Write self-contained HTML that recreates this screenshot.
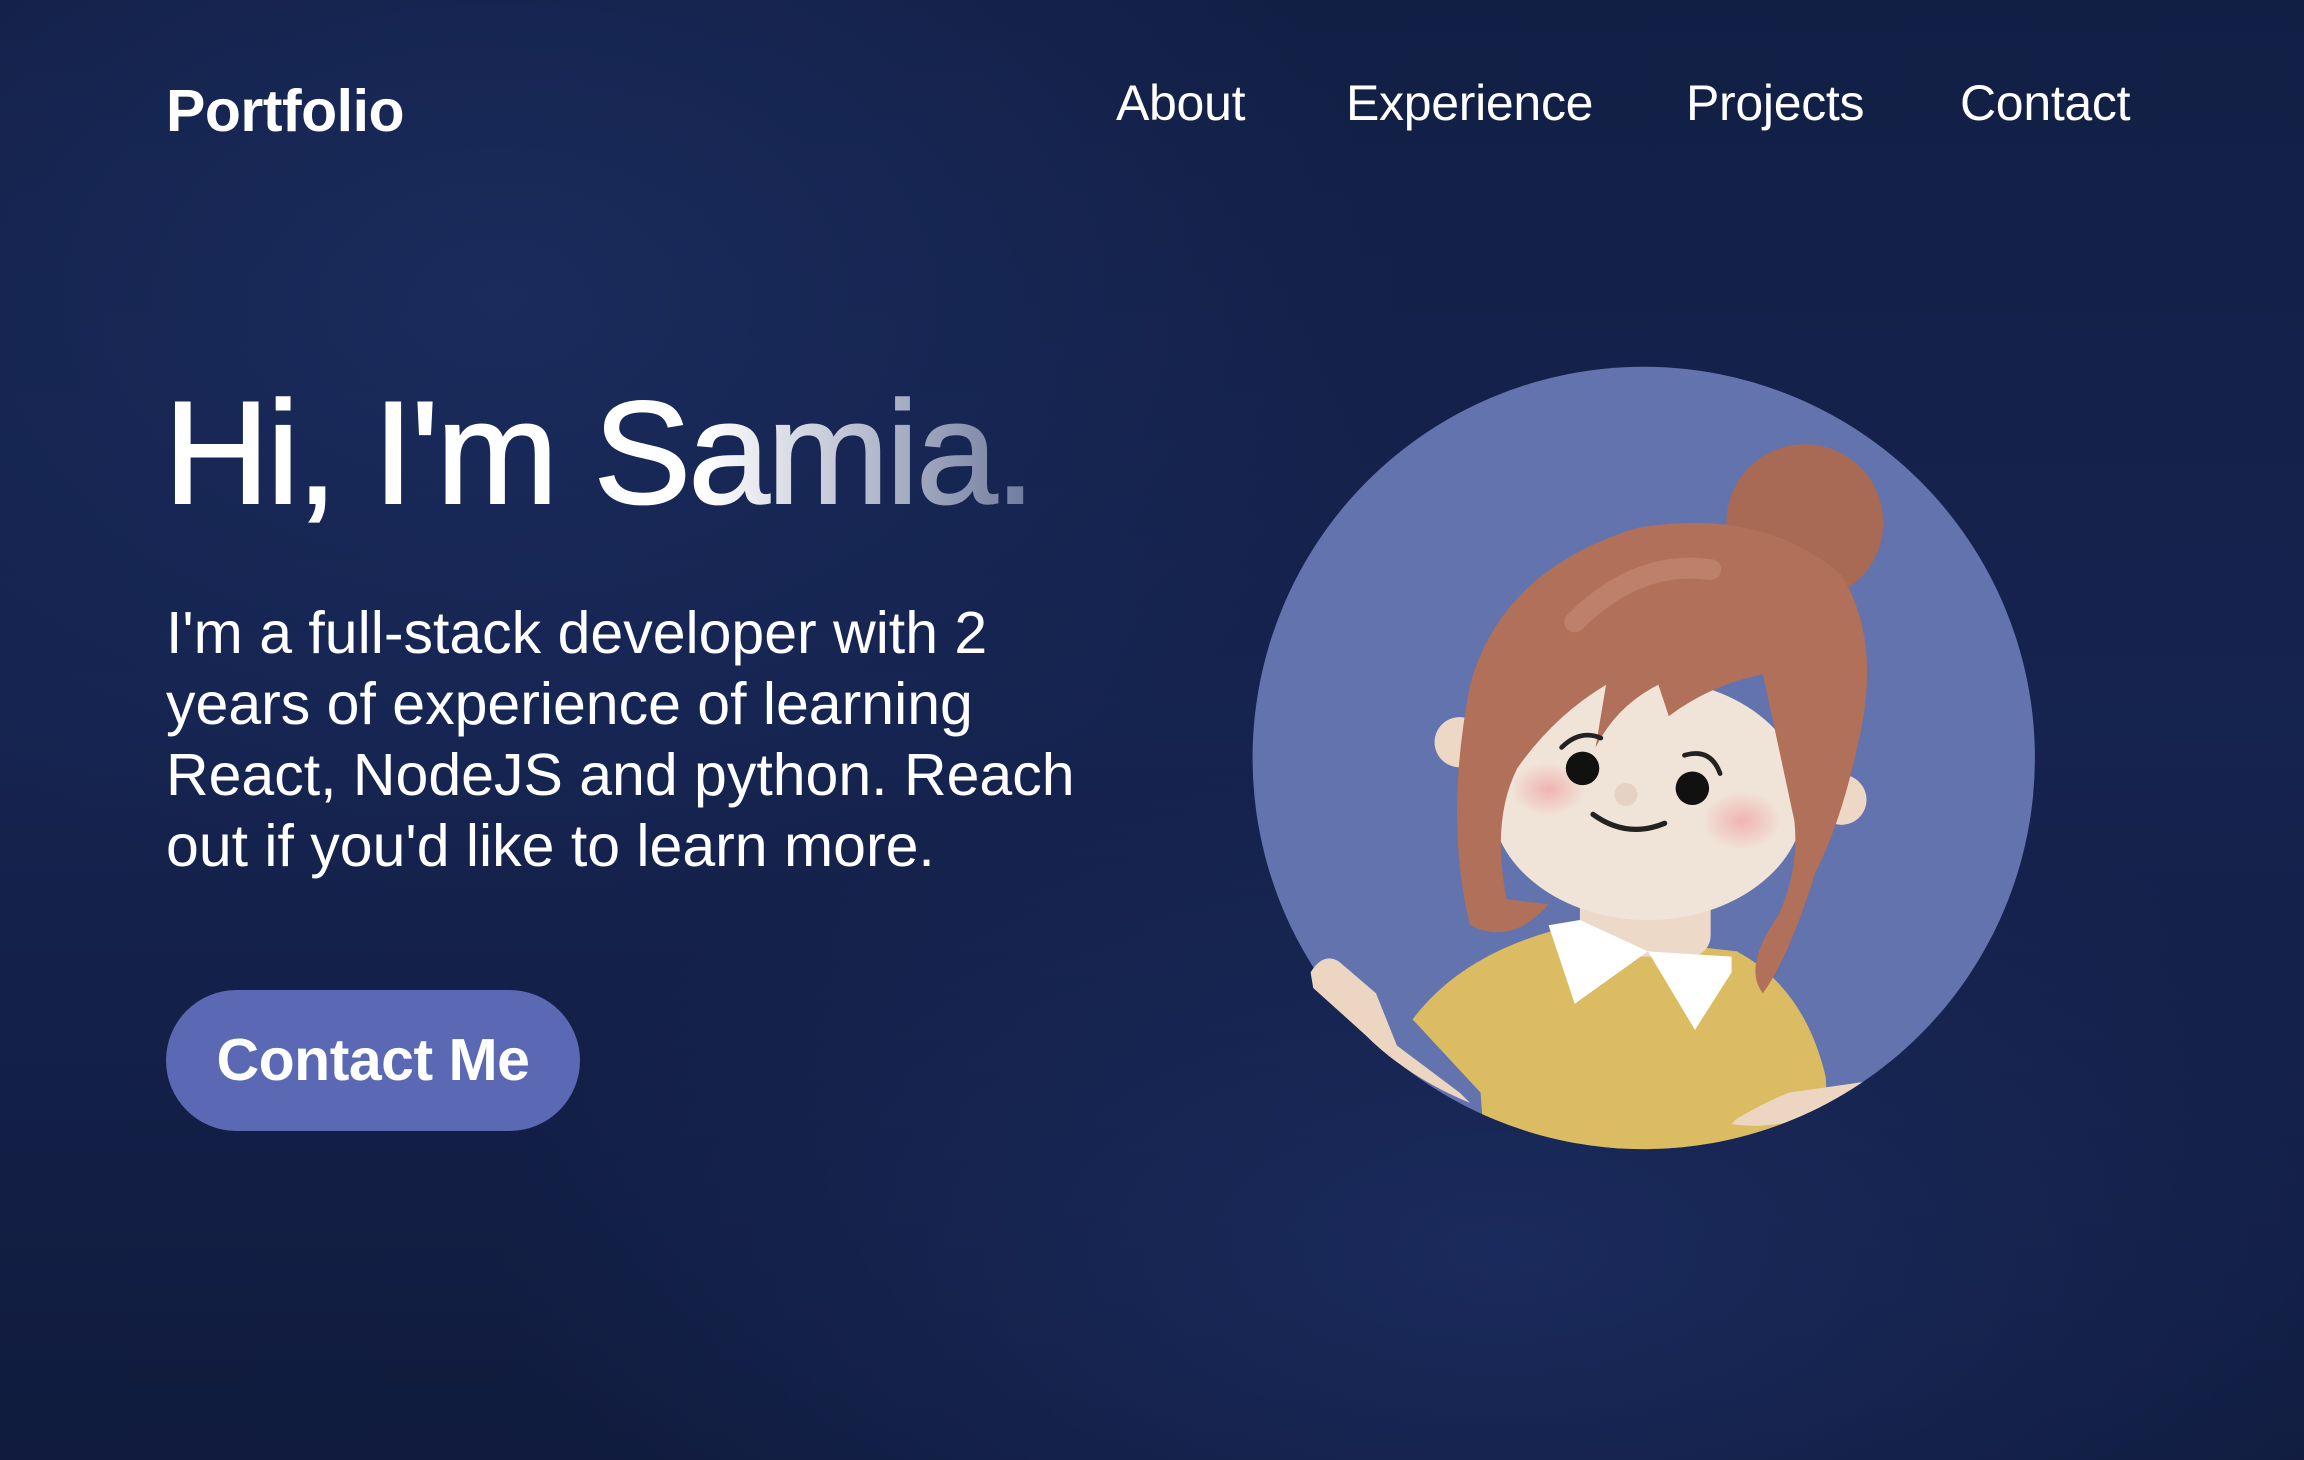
<!DOCTYPE html>
<html><head><meta charset="utf-8"><style>
html,body{margin:0;padding:0}
body{width:2304px;height:1460px;overflow:hidden;position:relative;font-family:"Liberation Sans",sans-serif;color:#fff;
background:radial-gradient(ellipse 900px 600px at 500px 300px,#1a2b5c 0%,rgba(26,43,92,0) 100%),radial-gradient(ellipse 1000px 500px at 1500px 1250px,#1a2a5c 0%,rgba(26,43,92,0) 100%),linear-gradient(180deg,#121f45 0%,#15234f 50%,#101b3d 100%);}
.logo{position:absolute;left:166px;top:77px;font-size:59px;font-weight:bold;letter-spacing:-0.5px}
.nav{position:absolute;top:74px;font-size:50px;letter-spacing:-0.3px}
h1{position:absolute;left:164px;top:380px;margin:0;font-size:146px;font-weight:normal;letter-spacing:-2.5px;line-height:1;
-webkit-text-stroke:2px transparent;
background:linear-gradient(90deg,#fff 0%,#fff 62%,#6e7a9c 100%);-webkit-background-clip:text;background-clip:text;color:transparent}
p{position:absolute;left:166px;top:598px;margin:0;font-size:59px;line-height:71px;letter-spacing:0px}
.btn{position:absolute;left:166px;top:990px;width:414px;height:141px;border-radius:71px;background:#5b69b5;font-size:59px;font-weight:bold;text-align:center;line-height:141px;letter-spacing:-0.5px}
</style></head><body>
<div class="logo">Portfolio</div>
<div class="nav" style="left:1116px">About</div>
<div class="nav" style="left:1346px">Experience</div>
<div class="nav" style="left:1686px">Projects</div>
<div class="nav" style="left:1960px">Contact</div>
<h1>Hi, I'm Samia.</h1>
<p>I'm a full-stack developer with 2<br>years of experience of learning<br>React, NodeJS and python. Reach<br>out if you'd like to learn more.</p>
<div class="btn">Contact Me</div>
<svg style="position:absolute;left:1240px;top:350px" width="820" height="820" viewBox="0 0 1568 1568">
<defs><clipPath id="c"><circle cx="772" cy="780" r="748"/></clipPath>
<radialGradient id="bl"><stop offset="0" stop-color="#f0b3b3"/><stop offset="1" stop-color="#f0b3b3" stop-opacity="0"/></radialGradient></defs>
<circle cx="772" cy="780" r="748" fill="#6373ae"/>
<g clip-path="url(#c)">
<path d="M330 1280 Q420 1160 600 1110 L950 1150 Q1080 1220 1120 1390 L1130 1560 L470 1560 L460 1420 Z" fill="#dcbc62"/>
<rect x="650" y="1000" width="250" height="160" rx="40" fill="#ecd9c8"/>
<path d="M590 1100 L650 1090 L780 1150 L640 1250 Z" fill="#fff"/>
<path d="M780 1150 L940 1160 L940 1190 L870 1300 Z" fill="#fff"/>
<path d="M950 1470 Q1000 1440 1050 1420 L1190 1400 L1200 1450 L1080 1470 Q1000 1490 940 1480 Z" fill="#ecd6c2"/>
</g>
<path d="M135 1190 Q160 1150 190 1170 L260 1230 L300 1330 L420 1420 L440 1440 Q320 1390 240 1310 L140 1220 Z" fill="#ecd6c2"/>
<circle cx="1080" cy="330" r="150" fill="#a86a55"/>
<circle cx="420" cy="750" r="48" fill="#edd8c6"/>
<circle cx="1150" cy="860" r="48" fill="#edd8c6"/>
<ellipse cx="780" cy="860" rx="300" ry="230" fill="#f0e3d7"/>
<ellipse cx="590" cy="840" rx="70" ry="50" fill="url(#bl)"/>
<ellipse cx="960" cy="900" rx="75" ry="55" fill="url(#bl)"/>
<path d="M440 1100 Q390 900 440 640 Q500 420 760 340 Q1000 300 1150 430 Q1230 560 1180 760 Q1150 900 1100 1000 Q1050 1160 1000 1230 Q960 1180 1030 1080 Q1070 990 1060 900 L1000 620 Q900 640 820 700 L800 640 Q720 680 680 760 L700 640 Q600 700 530 800 Q480 900 510 1050 L590 1060 Q520 1140 440 1100 Z" fill="#b0705a"/>
<path d="M640 520 Q760 400 900 420" stroke="#c9907c" stroke-width="40" fill="none" stroke-linecap="round" opacity=".5"/>
<circle cx="655" cy="800" r="32" fill="#111"/>
<circle cx="865" cy="838" r="32" fill="#111"/>
<path d="M615 760 Q650 725 690 742 M850 775 Q900 760 918 810" stroke="#222" stroke-width="9" fill="none" stroke-linecap="round"/>
<path d="M675 888 Q740 935 812 905" stroke="#222" stroke-width="10" fill="none" stroke-linecap="round"/>
<circle cx="738" cy="850" r="22" fill="#e6d2c4"/>
</svg>
</body></html>
